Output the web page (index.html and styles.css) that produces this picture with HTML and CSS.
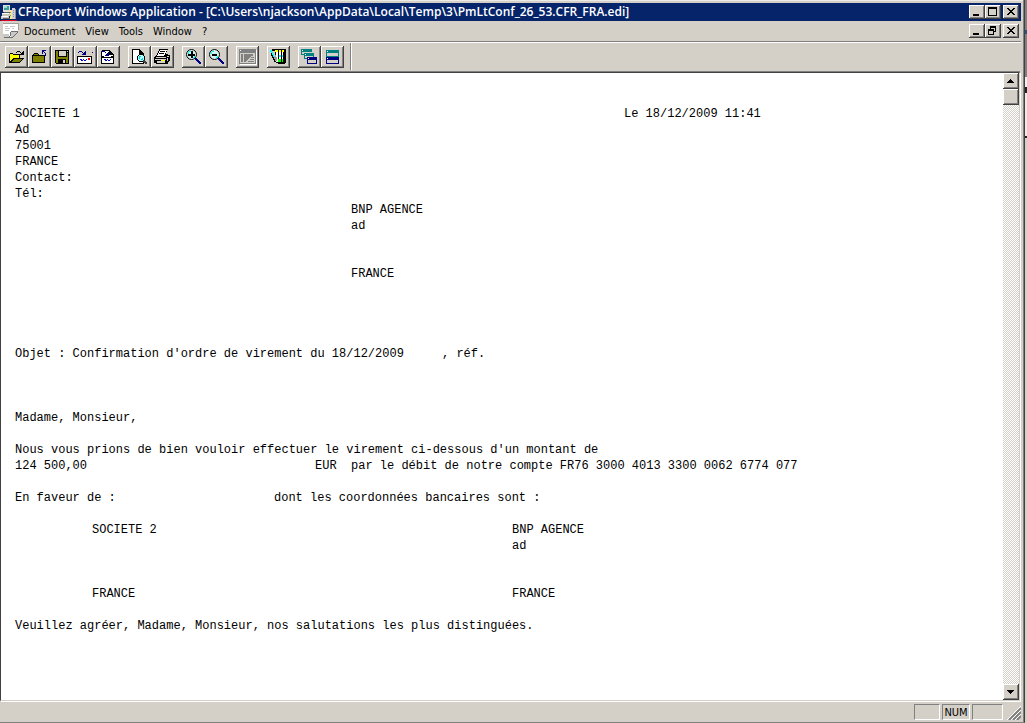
FILE: index.html
```
<!DOCTYPE html>
<html lang="en">
<head>
<meta charset="utf-8">
<title>CFReport Windows Application</title>
<link rel="stylesheet" href="styles.css">
</head>
<body>
<div class="desktop">
<main class="window">
  <header class="titlebar">
    <svg class="app-icon" width="16" height="17" viewBox="0 0 16 17" shape-rendering="crispEdges"><path fill="#e4e0d0" d="M2 1h7v7H2z"/><path fill="#40a0a0" d="M3 2h5v4H3z"/><path fill="#90e0e0" d="M3 2h3v2H3z"/><path fill="#c8c8b8" d="M1 9h8v3H1zM0 12h8v3H0z"/><path fill="#fff" d="M1 9h7v1H1zM1 12h6v1H1z"/><path fill="#606060" d="M2 14h7v1H2zM3 8h6v1H3z"/><path fill="#f0e890" d="M9 6h2v9H9z"/><path fill="#d0d0d8" d="M11 4h3v11h-3z"/><path fill="#909098" d="M14 5h1v10h-1zM12 6h1v1h-1zM12 8h1v1h-1zM12 10h1v1h-1zM12 12h1v1h-1zM9 8h1v1H9zM9 11h1v1H9z"/><path fill="#e00020" d="M0 16h16v1H0z"/></svg>
    <h1 class="title">CFReport Windows Application - [C:\Users\njackson\AppData\Local\Temp\3\PmLtConf_26_53.CFR_FRA.edi]</h1>
    <div class="controls">
      <button class="ctl" aria-label="Minimize"><svg width="16" height="14" shape-rendering="crispEdges"><path d="M4 9h6v2H4z"/></svg></button>
      <button class="ctl" aria-label="Maximize"><svg width="16" height="14" shape-rendering="crispEdges"><path fill-rule="evenodd" d="M3 2h9v9H3zM4 4v6h7V4z"/></svg></button>
      <button class="ctl ctl-close" aria-label="Close"><svg width="16" height="14" shape-rendering="crispEdges"><path d="M4 3h2v1h1v1h2V4h1V3h2v1h-1v1h-1v1H9v1h1v1h1v1h1v1h-2V9H9V8H7v1H6v1H4V9h1V8h1V7h1V6H6V5H5V4H4z"/></svg></button>
    </div>
  </header>
  <nav class="menubar">
    <svg class="doc-icon" width="17" height="16" viewBox="0 0 17 16" shape-rendering="crispEdges"><path fill="#fff" d="M0 1h15v7h-2l-5 6H0z"/><path fill="#a0a0a0" d="M0 0h16v1H0zM15 1h1v6h-1z"/><path fill="#c8c8c8" d="M2 3h3v1H2zM7 3h5v1H7zM2 5h5v1H2zM9 5h2v1H9zM2 7h4v1H2zM0 11h6v3H0zM8 9h6v1h-1v1h-1v1h-1v1h-1v1H8z"/><path fill="#707070" d="M8 8h7v1H8zM7 9h1v4H7zM14 9h1v1h-1zM13 10h1v1h-1zM12 11h1v1h-1zM11 12h1v1h-1zM10 13h1v1h-1zM6 13h1v1H6zM1 14h9v1H1z"/></svg>
    <button class="menu">Document</button><button class="menu">View</button><button class="menu">Tools</button><button class="menu">Window</button><button class="menu">?</button>
    <div class="controls">
      <button class="ctl" aria-label="Minimize document"><svg width="16" height="14" shape-rendering="crispEdges"><path d="M4 9h6v2H4z"/></svg></button>
      <button class="ctl" aria-label="Restore document"><svg width="16" height="14" shape-rendering="crispEdges"><path fill-rule="evenodd" d="M5 2h6v6H9v3H3V5h2zM6 4v1h3v2h1V4zM4 7v3h4V7z"/></svg></button>
      <button class="ctl ctl-close" aria-label="Close document"><svg width="16" height="14" shape-rendering="crispEdges"><path d="M4 3h2v1h1v1h2V4h1V3h2v1h-1v1h-1v1H9v1h1v1h1v1h1v1h-2V9H9V8H7v1H6v1H4V9h1V8h1V7h1V6H6V5H5V4H4z"/></svg></button>
    </div>
  </nav>
  <div class="toolbar">
    <div class="group">
      <button class="tool" aria-label="Open"><svg width="23" height="22" shape-rendering="crispEdges"><path d="M12 5h3v1h-3zM11 6h1v1h-1zM15 6h1v1h-1zM18 5h1v4h-4V8h1V7h1V6h1zM4 8h1V7h3v1h7v4h4v1h-1v1h-1v1h-1v1h-1v1H4z"/><path fill="#ffff00" d="M5 8h3v1h6v3H8v1H7v1H6v1H5z"/><path fill="#808000" d="M9 13h9l-4 3H6z"/></svg></button>
      <button class="tool" aria-label="Close file"><svg width="23" height="22" shape-rendering="crispEdges"><path d="M4 9h1V8h1V7h4v1h1v1h6v8H4z"/><path fill="#808000" d="M5 10h11v6H5zM6 8h4v1H6z"/><path fill="#000080" d="M14 4h4v1h-3v3h-1zM16 6h1v1h-1zM17 7h1v3h-1zM15 5h1v1h-1z"/></svg></button>
      <button class="tool" aria-label="Save"><svg width="23" height="22" shape-rendering="crispEdges"><path d="M4 4h14v14H5v-1H4z"/><path fill="#808000" d="M5 5h2v6h9V7h1v10h-2v-4H7v4H5z"/><path fill="#d4d0c8" d="M8 5h7v5H8zM16 5h1v1h-1zM12 14h2v3h-2z"/></svg></button>
      <button class="tool" aria-label="Send"><svg width="23" height="22" shape-rendering="crispEdges"><path d="M3 10h15v8H3z"/><path fill="#fff" d="M4 11h13v6H4z"/><path fill="red" d="M14 12h2v2h-2z"/><path fill="#0000c0" d="M6 13h2v1H6zM7 14h2v1H7zM9 13h1v1H9zM10 14h2v1h-2zM12 13h1v1h-1z"/><path fill="#000080" d="M5 5h3v1H5zM4 6h1v1H4zM8 6h1v1H8zM11 5h1v4H8V8h1V7h1V6h1zM18 6h1v1h-1z"/></svg></button>
      <button class="tool" aria-label="Send document"><svg width="23" height="22" shape-rendering="crispEdges"><path d="M5 4h8v1h1v1h1v1h1v1h1v10H4V5h1z"/><path fill="#fff" d="M6 5h6v4h4v2H5V6h1zM5 12h11v5H5z"/><path d="M4 10h3v1H4zM14 10h3v1h-3zM13 5h1v3h-1zM13 8h3v1h-3z"/><path fill="#0000c0" d="M7 13h2v1H7zM8 14h2v1H8zM10 13h1v1h-1zM11 14h2v1h-2zM13 13h1v1h-1z"/><path fill="#000080" d="M4 5h4v1H4zM8 6h1v1H8zM11 6h1v4H8V9h1V8h1V7h1z"/></svg></button>
    </div>
    <div class="group">
      <button class="tool" aria-label="Print preview"><svg width="23" height="22" shape-rendering="crispEdges"><path d="M4 3h8v1h1v1h1v1h1v1h1v11H4z"/><path fill="#fff" d="M5 4h6v4h4v9H5z"/><path d="M11 4h1v3h3v1h-4zM11 8h4v1h1v1h1v4h-1v1h1v1h-6v-1h-1v-1H9v-4h1V9h1z"/><path fill="#b0ffff" d="M11 9h4v1h1v4h-1v1h-4v-1h-1v-4h1z"/><path fill="#00d0e0" d="M11 10h2v1h-1v2h-1zM14 12h1v2h-2v-1h1z"/><path fill="#404040" d="M15 14h2v1h1v1h1v2h-2v-1h-1v-1h-1z"/></svg></button>
      <button class="tool" aria-label="Print"><svg width="23" height="22" shape-rendering="crispEdges"><path d="M8 3h9v1h-1v2h-1v2h2v1h2v6h-1v1h-1v2H5v-1H3v-6h1v-1h1V9h1V7h1V5h1z"/><path fill="#fff" d="M9 4h7l-3 6H6z"/><path d="M9 5h5v1H9zM8 7h5v1H8z"/><path fill="#d4d0c8" d="M5 11h10v1H5zM4 13h11v1H4zM16 10h2v1h-2zM16 12h1v3h-1zM6 15h8v2H6z"/><path fill="#ffff00" d="M10 14h4v1h-4z"/></svg></button>
    </div>
    <div class="group">
      <button class="tool" aria-label="Zoom in"><svg width="23" height="22"><circle cx="9.500" cy="8.500" r="5" fill="#d4f4f0" stroke="#000"/><g shape-rendering="crispEdges"><path fill="#00ffff" d="M6 6h1V5h2v1H7v2H6zM11 11h1v-1h1v2h-2z"/><path d="M6 8h7v2H6zM9 5h2v7H9z"/><path fill="#000080" d="M13 12h2v1h1v1h1v1h1v1h1v2h-2v-1h-1v-1h-1v-1h-1v-1h-1z"/></g></svg></button>
      <button class="tool" aria-label="Zoom out"><svg width="23" height="22"><circle cx="9.500" cy="8.500" r="5" fill="#d4f4f0" stroke="#000"/><g shape-rendering="crispEdges"><path fill="#00ffff" d="M6 6h1V5h2v1H7v2H6zM11 11h1v-1h1v2h-2z"/><path d="M7 8h5v2H7z"/><path fill="#000080" d="M13 12h2v1h1v1h1v1h1v1h1v2h-2v-1h-1v-1h-1v-1h-1v-1h-1z"/></g></svg></button>
    </div>
    <div class="group">
      <button class="tool" aria-label="Properties" disabled><svg width="23" height="22" shape-rendering="crispEdges"><path fill="#fff" d="M4 4h17v15H4z"/><path fill="#808080" d="M3 3h17v15H3z"/><path fill="#d4d0c8" d="M4 7h15v10H4z"/><path fill="#fff" d="M4 4h1v1H4z"/><path fill="#808080" d="M5 8h2v8H5zM8 8h9l-8 8H8z"/><path fill="#808080" d="M16 9h1v1h-1zM15 11h3v1h-3zM14 13h4v1h-4zM12 15h6v1h-6z"/></svg></button>
    </div>
    <div class="group">
      <button class="tool" aria-label="Edit table"><svg width="23" height="22" shape-rendering="crispEdges"><path d="M5 3h14v14h-1v1h-7v-1H9v-2H8V5H5z"/><path fill="#fff" d="M9 5h7v11H9z"/><path fill="#ffff00" d="M8 4h9v2H8z"/><path fill="#00ffff" d="M3 4h2v2h1v2h1v2h1v2H6v-2H5V8H4V6H3zM12 9h4v2h-4z"/><path fill="#00ff00" d="M11 13h5v3h-5z"/><path d="M11 4h1v9h-1zM14 4h1v12h-1zM3 7h1v3h1v2h1v2h1v2h2v1h2v-1H9v-1H8v-2H7v-2H6v-2H5V7z"/><path fill="#a0a0a0" d="M7 11h3v4H8v-2H7zM8 9h1v2H8z"/></svg></button>
    </div>
    <div class="group">
      <button class="tool" aria-label="Cascade"><svg width="23" height="22" shape-rendering="crispEdges"><path fill="#008080" d="M3 3h11v6H3z"/><path fill="#d4d0c8" d="M4 6h9v2H4z"/><path fill="#fff" d="M4 4h1v1H4z"/><path fill="#d4d0c8" d="M6 6h11v7H6z"/><path fill="#008080" d="M6 7h10v6H6z"/><path fill="#d4d0c8" d="M7 10h8v2H7z"/><path fill="#fff" d="M7 8h1v1H7z"/><path fill="#000080" d="M9 11h10v7H9z"/><path fill="#d4d0c8" d="M10 14h8v3h-8z"/><path fill="#fff" d="M10 12h1v1h-1z"/></svg></button>
      <button class="tool" aria-label="Tile"><svg width="23" height="22" shape-rendering="crispEdges"><path fill="#008080" d="M5 4h13v7H5z"/><path fill="#d4d0c8" d="M6 7h11v3H6z"/><path fill="#fff" d="M6 5h1v1H6z"/><path fill="#000080" d="M5 11h13v7H5z"/><path fill="#d4d0c8" d="M6 14h11v3H6z"/><path fill="#fff" d="M6 12h1v1H6z"/></svg></button>
    </div>
    <div class="divider"></div>
  </div>
  <div class="view">
    <article class="report">
      <p><span class="to-date">SOCIETE 1</span><span>Le 18/12/2009 11:41</span></p>
      <p>Ad</p>
      <p>75001</p>
      <p>FRANCE</p>
      <p>Contact:</p>
      <p>Tél:</p>
      <p class="bank">BNP AGENCE</p>
      <p class="bank">ad</p>
      <p></p><p></p>
      <p class="bank">FRANCE</p>
      <p></p><p></p><p></p><p></p>
      <p><span class="to-ref">Objet : Confirmation d'ordre de virement du 18/12/2009</span><span>, réf.</span></p>
      <p></p><p></p><p></p>
      <p>Madame, Monsieur,</p>
      <p></p>
      <p>Nous vous prions de bien vouloir effectuer le virement ci-dessous d'un montant de</p>
      <p><span class="to-currency">124 500,00</span><span>EUR  par le débit de notre compte FR76 3000 4013 3300 0062 6774 077</span></p>
      <p></p>
      <p><span class="to-details">En faveur de :</span><span>dont les coordonnées bancaires sont :</span></p>
      <p></p>
      <p class="parties"><span class="to-payee">SOCIETE 2</span><span>BNP AGENCE</span></p>
      <p class="parties"><span class="to-payee"></span><span>ad</span></p>
      <p></p><p></p>
      <p class="parties"><span class="to-payee">FRANCE</span><span>FRANCE</span></p>
      <p></p>
      <p>Veuillez agréer, Madame, Monsieur, nos salutations les plus distinguées.</p>
    </article>
    <div class="scrollbar">
      <button class="scroll-btn" aria-label="Scroll up"><svg width="16" height="16" shape-rendering="crispEdges"><path d="M7 6h1v1h1v1h1v1h1v1H4V9h1V8h1V7h1z"/></svg></button>
      <div class="thumb"></div>
      <div class="track"></div>
      <button class="scroll-btn" aria-label="Scroll down"><svg width="16" height="16" shape-rendering="crispEdges"><path d="M4 6h7v1h-1v1H9v1H8v1H7V9H6V8H5V7H4z"/></svg></button>
    </div>
  </div>
  <footer class="statusbar">
    <span class="pane pane-caps"></span><span class="pane pane-num">NUM</span><span class="pane pane-scroll"></span>
    <svg class="grip" width="14" height="14"><path fill="none" stroke="#808080" stroke-width="2" d="M2 14 14 2M6 14l8-8M10 14l4-4"/><path fill="none" stroke="#fff" d="M0 14 14 0M4 14 14 4M8 14l6-6"/></svg>
  </footer>
</main>
<div class="behind"></div>
</div>
</body>
</html>
```
FILE: styles.css
```
* { box-sizing: border-box; }
body {
  margin: 0;
  background: #d4d0c8;
  color: #000;
  font: 11px/14px "DejaVu Sans Condensed", "DejaVu Sans", sans-serif;
}
button {
  margin: 0;
  padding: 0;
  border: 0;
  background: #d4d0c8;
  color: inherit;
  font: inherit;
}
svg { display: block; flex: none; }
p { margin: 0; }

.desktop { display: flex; min-height: 100vh; }
.window {
  flex: 1;
  min-width: 0;
  display: flex;
  flex-direction: column;
  padding: 3px 2px 0 0;
  border-right: 1px solid #404040;
  border-bottom: 1px solid #808080;
  box-shadow: inset -1px 0 #808080, inset 0 1px #ecebe7;
}
.behind {
  width: 2px;
  background: linear-gradient(#808080 0 30px, #1f5a80 30px 34px, #808080 34px 77px, #f4f2ee 77px 87px, #222 87px 93px, #f4e8e4 93px 136px, #222 136px 138px, #d4d0c8 138px);
}

.titlebar {
  display: flex;
  align-items: center;
  height: 18px;
  margin-right: 1px;
  padding: 0 2px 0 1px;
  background: #06246a;
  color: #fff;
}
.title {
  flex: 1;
  min-width: 0;
  margin: 0 0 0 1px;
  overflow: hidden;
  font-family: "Noto Sans", "Open Sans", sans-serif;
  font-size: 12px;
  font-weight: 600;
  line-height: 18px;
  white-space: nowrap;
}
.title { font-family: "Open Sans", sans-serif; }
.controls { display: flex; margin-left: auto; }
.ctl, .tool, .thumb, .scroll-btn {
  box-shadow: inset -1px -1px #404040, inset 1px 1px #fff, inset -2px -2px #808080;
}
.ctl { width: 16px; height: 14px; }
.ctl-close { margin-left: 2px; }

.menubar {
  display: flex;
  align-items: center;
  height: 21px;
  margin-right: 1px;
  padding: 0 2px 0 3px;
  border-bottom: 1px solid #808080;
}
.menu { height: 20px; padding: 2px 5px 0; }
.doc-icon { margin-right: -1px; }

.toolbar {
  display: flex;
  gap: 8px;
  height: 29px;
  margin-right: 1px;
  padding: 3px 0 3px 5px;
  border-top: 1px solid #fff;
}
.group { display: flex; }
.tool { width: 23px; height: 22px; }
.divider {
  width: 2px;
  height: 27px;
  margin: -3px 0 0 -2px;
  border-left: 1px solid #808080;
  background: #fff;
}

.view {
  flex: 1;
  display: flex;
  margin: 1px 2px 0 0;
  border: 1px solid;
  border-color: #404040 #d4d0c8 #d4d0c8 #404040;
  box-shadow: 0 -1px #808080, 1px 1px #fff;
  background: #fff;
}
.report {
  flex: 1;
  min-width: 0;
  padding: 33px 14px;
  font: 12px/16px "Liberation Mono", monospace;
}
.report p { display: flex; height: 16px; white-space: pre; }
.report .bank { padding-left: 336px; }
.report .parties { padding-left: 77px; }
.to-date { width: 609px; }
.to-ref { width: 427px; }
.to-currency { width: 300px; }
.to-details { width: 259px; }
.to-payee { width: 420px; }

.scrollbar {
  display: flex;
  flex-direction: column;
  width: 16px;
}
.scroll-btn, .thumb { width: 16px; height: 16px; background: #d4d0c8; }
.track {
  flex: 1;
  background: repeating-conic-gradient(#d4d0c8 0 25%, #fff 0 50%) 0 0 / 2px 2px;
}

.statusbar {
  display: flex;
  justify-content: flex-end;
  gap: 2px;
  height: 21px;
  padding: 3px 1px 2px 0;
}
.pane {
  height: 16px;
  border: 1px solid;
  border-color: #808080 #fff #fff #808080;
  line-height: 15px;
  text-align: center;
}
.pane-caps { width: 26px; }
.pane-num { width: 28px; }
.pane-scroll { width: 31px; }
.grip { margin: 2px 0 0 2px; }
```
